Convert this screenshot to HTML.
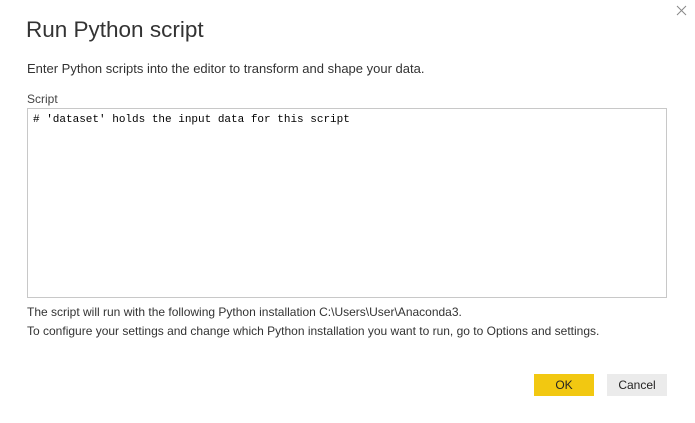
<!DOCTYPE html>
<html><head><meta charset="utf-8"><style>
body{margin:0;width:695px;height:423px;background:#fff;position:relative;font-family:"Liberation Sans",sans-serif;color:#252423;overflow:hidden}
.a{position:absolute;white-space:nowrap}
</style></head><body>
<svg class="a" style="left:676px;top:5px" width="11" height="11" viewBox="0 0 11 11"><path d="M1 1L10 10M10 1L1 10" stroke="#888" stroke-width="1"/></svg>
<div class="a" style="left:26px;top:17px;font-size:22.5px;color:#333">Run Python script</div>
<div class="a" style="left:27px;top:61px;font-size:13px;color:#333">Enter Python scripts into the editor to transform and shape your data.</div>
<div class="a" style="left:27px;top:92px;font-size:12px;color:#444">Script</div>
<div class="a" style="left:27px;top:108px;width:638px;height:188px;border:1px solid #c8c8c8"></div>
<div class="a" style="left:33px;top:114px;font-family:'Liberation Mono',monospace;font-size:11px;color:#000">#&nbsp;'dataset'&nbsp;holds&nbsp;the&nbsp;input&nbsp;data&nbsp;for&nbsp;this&nbsp;script</div>
<div class="a" style="left:27px;top:305px;font-size:12px;color:#333">The script will run with the following Python installation C:\Users\User\Anaconda3.</div>
<div class="a" style="left:27px;top:324px;font-size:12px;color:#333">To configure your settings and change which Python installation you want to run, go to Options and settings.</div>
<div class="a" style="left:534px;top:374px;width:60px;height:22px;background:#f2c811;font-size:12px;line-height:22px;text-align:center;color:#252423">OK</div>
<div class="a" style="left:607px;top:374px;width:60px;height:22px;background:#ebebeb;font-size:12px;line-height:22px;text-align:center;color:#252423">Cancel</div>
</body></html>
